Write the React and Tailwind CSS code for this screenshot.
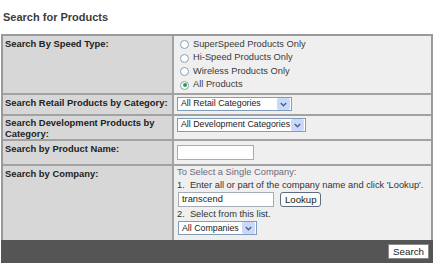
import React from "react";

function Radio({ checked, label }) {
  return (
    <div className="flex h-[13.5px] items-center">
      <span className="relative ml-[3px] mr-[4px] inline-block h-[9px] w-[9px] rounded-full border border-[#8a9fb5] bg-white">
        {checked && (
          <span className="absolute left-[1.5px] top-[1.5px] h-[4px] w-[4px] rounded-full bg-[#2ea52e]" />
        )}
      </span>
      <span>{label}</span>
    </div>
  );
}

function Select({ label, width }) {
  return (
    <div
      className={
        "flex h-[14px] items-center border border-[#7f9db9] bg-white " + width
      }
    >
      <span className="flex-1 whitespace-nowrap pl-[3px] text-[8.8px] text-[#222]">
        {label}
      </span>
      <span className="mr-[1px] flex h-[12px] w-[13px] shrink-0 items-center justify-center rounded-[2px] bg-[#c9d8fb]">
        <svg width="7" height="5" viewBox="0 0 7 5">
          <path
            d="M0.8 1 L3.5 3.7 L6.2 1"
            fill="none"
            stroke="#4d6185"
            strokeWidth="1.4"
          />
        </svg>
      </span>
    </div>
  );
}

function Row({ label, height, children, last, leading }) {
  return (
    <div
      className={
        "flex " + height + (last ? "" : " border-b-2 border-[#a2a2a2]")
      }
    >
      <div
        className={
          "w-[171px] shrink-0 border-r-2 border-[#a2a2a2] bg-[#d7d7d7] px-[2px] text-[9.4px] font-bold text-[#222] " +
          (leading || "pt-[2px] leading-[12px]")
        }
      >
        {label}
      </div>
      <div className="flex-1 bg-[#efefef] pl-[3px]">{children}</div>
    </div>
  );
}

export default function App() {
  return (
    <div
      className="h-[267px] w-[446px] overflow-hidden bg-white text-[9.3px] text-[#3a3a3a]"
      style={{ fontFamily: '"Liberation Sans", Arial, sans-serif' }}
    >
      <div className="h-[10px]" />
      <h1 className="pl-[3px] text-[11px] font-bold leading-[14px] text-[#3d3d3d]">
        Search for Products
      </h1>
      <div className="ml-[1px] mt-[10px] w-[432px] border-x-2 border-t-2 border-[#9a9a9a]">
        <Row label="Search By Speed Type:" height="h-[59px]">
          <div className="pt-[2px]">
            <Radio label="SuperSpeed Products Only" />
            <Radio label="Hi-Speed Products Only" />
            <Radio label="Wireless Products Only" />
            <Radio label="All Products" checked />
          </div>
        </Row>
        <Row label="Search Retail Products by Category:" height="h-[21px]">
          <div className="pt-[2px]">
            <Select label="All Retail Categories" width="w-[115px]" />
          </div>
        </Row>
        <Row
          label={
            <>
              Search Development Products by
              <br />
              Category:
            </>
          }
          height="h-[25px]"
          leading="pt-[1px] leading-[11px]"
        >
          <div className="pt-[2px]">
            <Select label="All Development Categories" width="w-[129px]" />
          </div>
        </Row>
        <Row label="Search by Product Name:" height="h-[25px]">
          <div className="pt-[4px]">
            <div className="h-[15px] w-[77px] border border-[#a5acb5] bg-white" />
          </div>
        </Row>
        <Row label="Search by Company:" height="h-[74px]" last>
          <div className="leading-[13px]">
            <div className="text-[#6a6a7e]">To Select a Single Company:</div>
            <div className="text-[#333]">
              1. &nbsp;Enter all or part of the company name and click 'Lookup'.
            </div>
            <div className="flex items-center gap-[6px] pl-[1px]">
              <div className="flex h-[15px] w-[96px] items-center border border-[#a5acb5] bg-white pl-[3px] text-[#222]">
                transcend
              </div>
              <button className="flex h-[15px] items-center rounded-[3px] border border-[#5d6c80] bg-[#fbfbf8] px-[4px] text-[9.6px] leading-none text-[#222]">
                Lookup
              </button>
            </div>
            <div className="mt-[1px] text-[#333]">2. &nbsp;Select from this list.</div>
            <div className="pl-[1px]">
              <Select label="All Companies" width="w-[79px]" />
            </div>
          </div>
        </Row>
      </div>
      <div className="ml-[1px] flex h-[23px] w-[432px] items-center justify-end bg-[#555555] pr-[4px]">
        <button className="flex h-[15px] items-center border border-[#8a8a8a] bg-white px-[4px] text-[9.8px] leading-none text-[#222]">
          Search
        </button>
      </div>
    </div>
  );
}
